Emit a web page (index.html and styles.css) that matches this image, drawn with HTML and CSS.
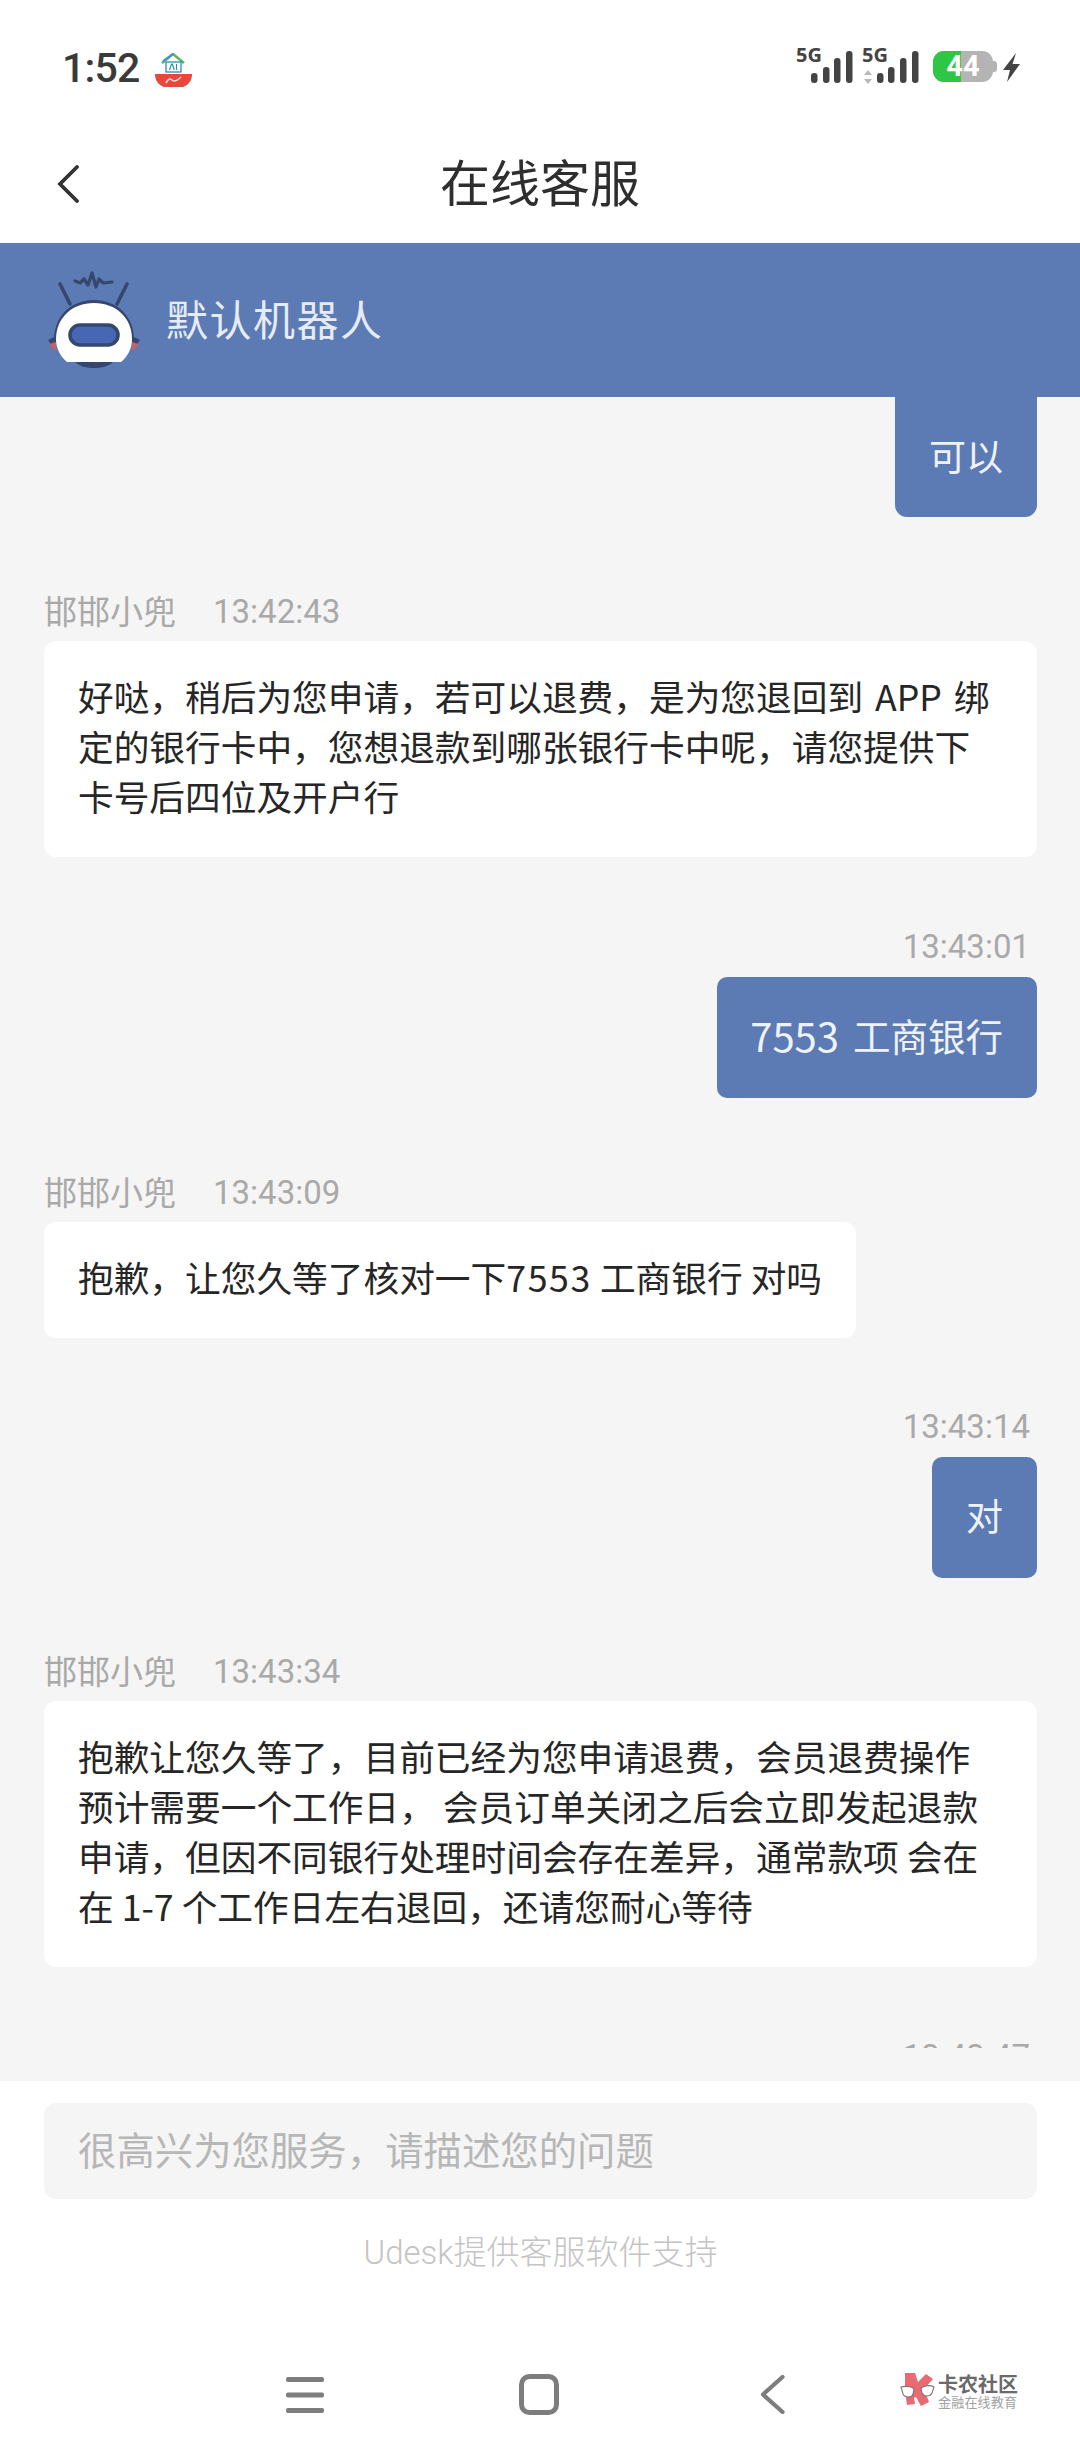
FILE: index.html
```html
<!DOCTYPE html>
<html lang="zh">
<head>
<meta charset="utf-8">
<title>在线客服</title>
<link rel="stylesheet" href="styles.css">
</head>
<body>
<div class="phone">
  <div class="status">
    <div class="status-left">
      <span class="clock">1:52</span>
      <svg class="app-icon" width="37" height="34" viewBox="0 0 37 34">
        <path d="M7 10 18 1l11 9" fill="none" stroke="#5fb36a" stroke-width="2.6"/>
        <path d="M8 8 18 1" fill="none" stroke="#3f8fd0" stroke-width="1.6"/>
        <rect x="11" y="9" width="15" height="10" fill="#fff" stroke="#2d8fb0" stroke-width="1.3"/>
        <path d="M14.500 17l2-6h.8l2 6M21.500 11v6" fill="none" stroke="#2d8fb0" stroke-width="1.200"/>
        <path d="M0 21h37c0 6-3 11-9 13H9C3 32 0 27 0 21z" fill="#e8483a"/>
        <path d="M11 30c2-4 4-5 6-3s5 1 9-3" fill="none" stroke="#fbd5cc" stroke-width="1.700"/>
      </svg>
    </div>
    <div class="status-right">
      <div class="signal"><span class="tag">5G</span>
        <svg width="57" height="36" viewBox="0 0 57 36"><g fill="#444"><rect x="15" y="25" width="6.500" height="10" rx="3"/><rect x="27" y="19" width="6.500" height="16" rx="3"/><rect x="38" y="10" width="6.500" height="25" rx="3"/><rect x="50" y="3" width="6.500" height="32" rx="3"/></g></svg>
      </div>
      <div class="signal"><span class="tag">5G</span>
        <svg width="57" height="36" viewBox="0 0 57 36"><path d="M2 27l4-5 4 5zM2 31l4 5 4-5z" fill="#b9b9b9"/><g fill="#444"><rect x="15" y="25" width="6.500" height="10" rx="3"/><rect x="26" y="19" width="6.500" height="16" rx="3"/><rect x="38" y="10" width="6.500" height="25" rx="3"/><rect x="50" y="3" width="6.500" height="32" rx="3"/></g></svg>
      </div>
      <div class="battery"><div class="battery-fill"></div><span class="battery-num">44</span><span class="battery-cap"></span></div>
      <svg class="bolt" width="17" height="29" viewBox="0 0 17 29"><path d="M13 0 0 17h7L4 29 17 11H9.500z" fill="#444"/></svg>
    </div>
  </div>

  <header class="nav">
    <svg class="nav-back" width="22" height="38" viewBox="0 0 22 38"><path d="M20 2 3 19l17 17" fill="none" stroke="#333" stroke-width="3.800" stroke-linecap="round"/></svg>
    <h1 class="nav-title">在线客服</h1>
  </header>

  <div class="agent-bar">
    <svg class="robot" width="94" height="100" viewBox="0 0 94 100">
      <path d="M13 14l10 20M80 14 70 34" stroke="#34486e" stroke-width="3.600" stroke-linecap="round"/>
      <path d="M28 11l5 2 4-4 4 6 4-12 4 14 3-8 4 4 9-1" fill="none" stroke="#34486e" stroke-width="3.200" stroke-linejoin="round" stroke-linecap="round"/>
      <path d="M1 70l8-4v16zM93 70l-8-4v16z" fill="#34486e"/>
      <path d="M2 74l7-2v10zM92 74l-7-2v10z" fill="#c4606a"/>
      <path d="M7 70C7 46 24 30 47 30s40 16 40 40z" fill="#34486e"/>
      <path d="M26 90h42c-6 7-14 8-21 8s-15-1-21-8z" fill="#34486e"/>
      <path d="M47 33C25 33 9 48 9 69c0 9 4 17 11 23h54c7-6 11-14 11-23 0-21-16-36-38-36z" fill="#fff"/>
      <rect x="23" y="55" width="48" height="20" rx="10" fill="#4767b4" stroke="#34486e" stroke-width="3.600"/>
    </svg>
    <span class="agent-name">默认机器人</span>
  </div>

  <main class="chat">
    <div class="thread">
      <div class="row row-out"><div class="bubble-out bubble-first">可以</div></div>

      <div class="meta meta-in after-out"><span class="who">邯邯小兜</span><span>13:42:43</span></div>
      <div class="bubble-in wide">好哒，稍后为您申请，若可以退费，是为您退回到&#x2004;APP&#x2004;绑定的银行卡中，您想退款到哪张银行卡中呢，请您提供下卡号后四位及开户行</div>

      <div class="meta meta-out after-in">13:43:01</div>
      <div class="row row-out"><div class="bubble-out bubble-num"><span class="num">7553</span><span>工商银行</span></div></div>

      <div class="meta meta-in after-out"><span class="who">邯邯小兜</span><span>13:43:09</span></div>
      <div class="bubble-in">抱歉，让您久等了核对一下<span class="digits">7553</span> 工商银行 对吗</div>

      <div class="meta meta-out after-in-tight">13:43:14</div>
      <div class="row row-out"><div class="bubble-out">对</div></div>

      <div class="meta meta-in after-out-tight"><span class="who">邯邯小兜</span><span>13:43:34</span></div>
      <div class="bubble-in wide">抱歉让您久等了，目前已经为您申请退费，会员退费操作预计需要一个工作日， 会员订单关闭之后会立即发起退款申请，但因不同银行处理时间会存在差异，通常款项 会在在 1-7 个工作日左右退回，还请您耐心等待</div>

      <div class="meta meta-out after-in">13:43:47</div>
    </div>
  </main>

  <footer class="composer">
    <div class="input">很高兴为您服务，请描述您的问题</div>
    <div class="powered">Udesk提供客服软件支持</div>
  </footer>

  <nav class="sysnav">
    <svg class="sys-menu" width="38" height="36" viewBox="0 0 38 36"><g fill="#7d7d7d"><rect x="0" y="0" width="38" height="5" rx="2"/><rect x="0" y="15.500" width="38" height="5" rx="2"/><rect x="0" y="31" width="38" height="5" rx="2"/></g></svg>
    <svg class="sys-home" width="40" height="41" viewBox="0 0 40 41"><rect x="2.500" y="2.500" width="35" height="36" rx="8" fill="none" stroke="#7d7d7d" stroke-width="5"/></svg>
    <svg class="sys-back" width="25" height="39" viewBox="0 0 25 39"><path d="M22.500 2 3 19.500 22.500 37" fill="none" stroke="#7d7d7d" stroke-width="4.200" stroke-linecap="round" stroke-linejoin="round"/></svg>
    <div class="watermark">
      <svg class="wm-logo" width="35" height="33" viewBox="0 0 35 33">
        <path d="M5 0h10l3 9 8-8 7 5-9 10 5 13-8 4-5-9-2 1 1 6-8 1-2-14z" fill="#ea6a73"/>
        <path d="M1 14c4-1 11-1 13 2l-1 5c-1 4-8 4-10 0zM21 15c3-3 10-3 13-1l-2 6c-2 4-8 4-10 0z" fill="#fff" stroke="#777" stroke-width="1.100"/>
      </svg>
      <div class="wm-text"><span class="wm-top">卡农社区</span><span class="wm-sub">金融在线教育</span></div>
    </div>
  </nav>
</div>
</body>
</html>
```
FILE: styles.css
```css
* { box-sizing: border-box; }
html, body { margin: 0; padding: 0; }
body { font-family: "Noto Sans CJK SC", "Noto Sans", Roboto, sans-serif; background: #fff; }
.phone { width: 1080px; height: 2460px; display: flex; flex-direction: column; overflow: hidden; background: #fff; }

.status { height: 127px; flex: none; display: flex; justify-content: space-between; align-items: flex-start; padding: 44px 60px 0 62px; }
.status-left { display: flex; align-items: flex-start; gap: 15px; }
.clock { font-family: Roboto, sans-serif; font-weight: 500; font-size: 41px; line-height: 48px; color: #3a3a3a; letter-spacing: -0.800px; }
.app-icon { margin-top: 9px; }
.status-right { display: flex; align-items: flex-start; margin-top: 4px; }
.signal { position: relative; width: 57px; height: 36px; margin-right: 9px; }
.signal svg { display: block; }
.tag { position: absolute; left: 0; top: -4px; font-family: "Open Sans", Roboto, sans-serif; font-weight: 700; font-size: 20px; line-height: 22px; color: #444; }
.battery { position: relative; width: 60px; height: 31px; margin: 3px 0 0 5px; display: flex; align-items: center; justify-content: center; background: #b4b4b4; border-radius: 11px; }
.battery-fill { position: absolute; left: 0; top: 0; bottom: 0; width: 28px; background: #2ec644; border-radius: 11px 0 0 11px; }
.battery-num { position: relative; font-family: Roboto, sans-serif; font-weight: 700; font-size: 29px; line-height: 31px; color: #fff; }
.battery-cap { position: absolute; right: -4px; top: 10px; width: 4px; height: 11px; background: #b4b4b4; border-radius: 0 3px 3px 0; }
.bolt { margin: 5px 0 0 10px; }

.nav { height: 116px; flex: none; display: flex; align-items: center; justify-content: center; position: relative; }
.nav-back { position: absolute; left: 57px; top: 38px; }
.nav-title { margin: 0; font-size: 50px; font-weight: 400; line-height: 64px; color: #2e2e2e; padding-bottom: 10px; }

.agent-bar { height: 154px; flex: none; background: #5c7bb4; display: flex; align-items: center; gap: 25px; padding: 0 0 0 47px; }
.agent-name { font-size: 42px; line-height: 56px; color: #e6ecf6; letter-spacing: 1.500px; margin-top: -5px; }

.chat { flex: 1; min-height: 0; background: #f5f5f5; padding: 0 43px 33px 44px; display: flex; flex-direction: column; }
.thread { flex: 1; min-height: 0; overflow: hidden; display: flex; flex-direction: column; }
.row { display: flex; flex: none; }
.row-out { justify-content: flex-end; }
.bubble-out { height: 121px; padding: 0 34px; background: #5c7bb4; color: #eef2f9; font-size: 37px; line-height: 116px; border-radius: 10px; white-space: nowrap; }
.bubble-first { height: 120px; border-radius: 0 0 12px 12px; }
.bubble-num { display: flex; gap: 14px; font-size: 37.500px; padding: 0 34px 0 33px; }
.bubble-num .num { font-size: 40px; }
.bubble-in { flex: none; align-self: flex-start; background: #fff; color: #262626; font-size: 35.700px; line-height: 50px; padding: 30px 34px 36px; border-radius: 12px; }
.digits { letter-spacing: 1.600px; }
.bubble-in.wide { align-self: stretch; }
.meta { flex: none; color: #a9a9a9; font-family: Roboto, "Noto Sans CJK SC", sans-serif; font-size: 33px; line-height: 40px; margin-bottom: 9px; }
.meta-in { display: flex; gap: 37px; }
.who { font-family: "Noto Sans CJK SC", sans-serif; line-height: 37px; }
.meta-out { text-align: right; padding-right: 7px; margin-bottom: 10px; }
.after-out { margin-top: 75px; }
.after-out-tight { margin-top: 74px; }
.after-in { margin-top: 70px; }
.after-in-tight { margin-top: 69px; }

.composer { height: 281px; flex: none; background: #fff; padding: 22px 43px 0 44px; display: flex; flex-direction: column; }
.input { height: 96px; background: #f5f5f5; border-radius: 12px; padding: 0 34px; font-size: 38.400px; line-height: 90px; color: #b7b7b7; }
.powered { margin-top: 29px; text-align: center; font-size: 33px; line-height: 50px; color: #c4c4c4; font-family: Roboto, "Noto Sans CJK SC", sans-serif; font-weight: 300; }

.sysnav { height: 98px; flex: none; position: relative; background: #fff; }
.sys-menu { position: absolute; left: 286px; top: 15px; }
.sys-home { position: absolute; left: 519px; top: 12px; }
.sys-back { position: absolute; left: 760px; top: 13px; }
.watermark { position: absolute; left: 900px; top: 12px; display: flex; align-items: flex-start; gap: 3px; }
.wm-logo { flex: none; margin-top: -1px; }
.wm-text { display: flex; flex-direction: column; }
.wm-top { font-size: 20px; line-height: 20px; font-weight: 700; color: #6a6a6a; }
.wm-sub { font-size: 13px; line-height: 16px; color: #a0a0a0; letter-spacing: 0.200px; }
```
